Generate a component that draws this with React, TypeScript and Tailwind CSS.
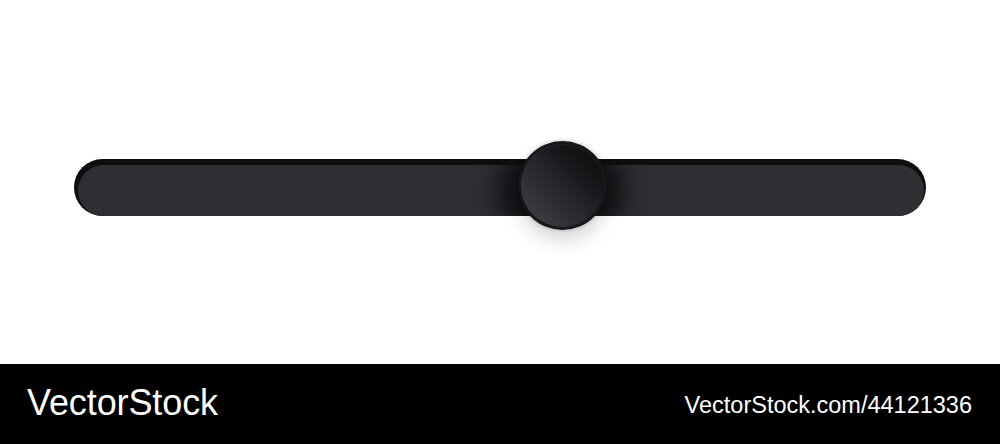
import React from "react";

function SliderTrack({ value }: { value: number }) {
  return (
    <div className="relative ml-[74px] h-[57px] w-[852px] rounded-full bg-[#0e0e11] pl-[4px] pt-[6px]">
      <div className="relative h-[51px] w-[846px] overflow-hidden rounded-full bg-[#2e2e33]">
        {/* darker halo where the knob sits on the track */}
        <div
          className="absolute top-[-20px] h-[92px] w-[128px] rounded-full bg-[#111114] blur-[12px]"
          style={{ left: `calc(${value}% - 66px)` }}
        />
      </div>
      <div
        className="absolute top-[-18px] flex size-[89px] items-center justify-center rounded-full bg-[#17171b] shadow-[0_12px_18px_rgba(0,0,0,0.14),0_0_4px_rgba(0,0,0,0.25)]"
        style={{ left: `calc(${value}% - 44px)` }}
      >
        <div className="size-[83px] rounded-full bg-[linear-gradient(45deg,#44444c_0%,#2a2a30_40%,#141417_75%,#0a0a0c_100%)] shadow-[inset_0_1px_1px_rgba(255,255,255,0.06)]" />
      </div>
    </div>
  );
}

export default function App() {
  return (
    <div className="flex h-[444px] w-[1000px] flex-col bg-white" style={{ fontFamily: "'Liberation Sans', Arial, sans-serif" }}>
      <div className="h-[364px] pt-[159px]">
        <SliderTrack value={57.3} />
      </div>
      <div className="flex h-[80px] items-center justify-between bg-black pl-[27px] pr-[28px] text-white">
        <span className="pb-[2px] text-[36px] leading-none tracking-[-0.1px]">VectorStock</span>
        <span className="pt-[4px] text-[23.5px] leading-none">VectorStock.com/44121336</span>
      </div>
    </div>
  );
}
